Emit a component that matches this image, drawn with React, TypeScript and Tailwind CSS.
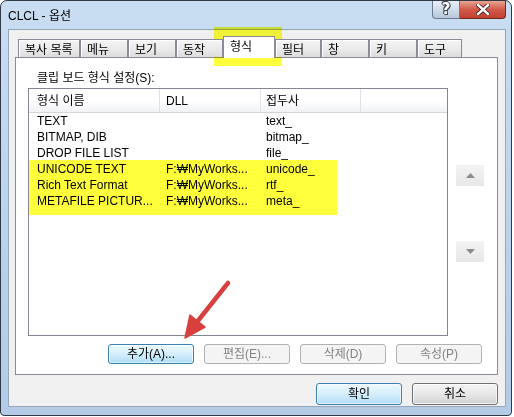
import React from "react";

const rows = [
  { name: "TEXT", dll: "", pre: "text_" },
  { name: "BITMAP, DIB", dll: "", pre: "bitmap_" },
  { name: "DROP FILE LIST", dll: "", pre: "file_" },
  { name: "UNICODE TEXT", dll: "F:₩MyWorks...", pre: "unicode_" },
  { name: "Rich Text Format", dll: "F:₩MyWorks...", pre: "rtf_" },
  { name: "METAFILE PICTUR...", dll: "F:₩MyWorks...", pre: "meta_" },
];

const tabs = [
  { label: "복사 목록", w: "w-[62px]" },
  { label: "메뉴", w: "w-[48px]" },
  { label: "보기", w: "w-[48px]" },
  { label: "동작", w: "w-[47px]" },
  { label: "형식", w: "w-[52px]", active: true },
  { label: "필터", w: "w-[46px]" },
  { label: "창", w: "w-[48px]" },
  { label: "키", w: "w-[48px]" },
  { label: "도구", w: "w-[45px]" },
];

function BlueButton({ children, className = "" }: { children: React.ReactNode; className?: string }) {
  return (
    <div
      className={`flex items-center justify-center rounded-[3px] border border-[#3c7fb1] bg-linear-to-b from-[#edf8fe] via-[#d6effc] to-[#acdcf6] shadow-[inset_0_0_0_1px_rgba(255,255,255,0.6)] ${className}`}
    >
      {children}
    </div>
  );
}

function DisabledButton({ children }: { children: React.ReactNode }) {
  return (
    <div className="flex h-[20px] w-[86px] items-center justify-center rounded-[3px] border border-[#adb2b5] bg-[#f4f4f4] text-[#838383]">
      {children}
    </div>
  );
}

export default function App() {
  return (
    <div className="relative h-[417px] w-[514px] overflow-hidden bg-white text-[12px] leading-[16px] text-black font-['Liberation_Sans','Noto_Sans_CJK_KR',sans-serif]">
      {/* window */}
      <div className="flex h-[416px] w-[512px] flex-col rounded-t-[7px] rounded-b-[4px] border border-[#2f3a46] bg-linear-to-b from-[#c9ddf2] via-[#bcd3ec] to-[#b3cbe6]">
        {/* title bar */}
        <div className="flex h-[28px] items-start">
          <div className="flex-1 pl-[7px] pt-[7px] text-[12px] leading-[16px] text-black">CLCL - 옵션</div>
          <div className="mr-[5px] flex">
            <div className="flex h-[18px] w-[28px] items-center justify-center rounded-bl-[4px] border border-t-0 border-[#6a7b90] bg-linear-to-b from-[#e9f0f7] via-[#d0dcea] to-[#b7c7da] pb-[1px] font-['DejaVu_Sans',sans-serif] text-[15px] font-bold leading-[15px] text-white [text-shadow:1px_0_0_#3a4654,-1px_0_0_#3a4654,0_1px_0_#3a4654,0_-1px_0_#3a4654,1px_1px_0_#3a4654,-1px_-1px_0_#3a4654]">
              ?
            </div>
            <div className="flex h-[18px] w-[46px] items-center justify-center rounded-br-[4px] border border-l-0 border-t-0 border-[#6e2a22] bg-linear-to-b from-[#e8a491] via-[#d0594a] to-[#c2402f]">
              <svg width="14" height="11" viewBox="0 0 14 11">
                <path d="M2 1 L12 10 M12 1 L2 10" stroke="#3b1a16" strokeWidth="4" strokeLinecap="square" />
                <path d="M2 1 L12 10 M12 1 L2 10" stroke="#ffffff" strokeWidth="2.4" strokeLinecap="square" />
              </svg>
            </div>
          </div>
        </div>

        {/* client */}
        <div className="mb-[8px] ml-[7px] mr-[5px] flex flex-1 flex-col border border-[#93a7bd] bg-[#f0f0f0]">
          {/* tabs */}
          <div className="ml-[6px] mt-[6px] flex flex-col">
            <div className="relative z-10 flex h-[21px] items-end pl-[3px]">
              {tabs.map((t) =>
                t.active ? (
                  <div
                    key={t.label}
                    className={`${t.w} -mb-px h-[22px] border border-b-0 border-[#898c95] bg-white pl-[6px] pt-[2px]`}
                  >
                    {t.label}
                  </div>
                ) : (
                  <div
                    key={t.label}
                    className={`${t.w} h-[18px] border border-b-0 border-[#898c95] bg-linear-to-b from-[#f4f4f4] via-[#ebebeb] to-[#dcdcdc] pl-[6px] pt-[2px] shadow-[inset_1px_1px_0_#ffffff]`}
                  >
                    {t.label}
                  </div>
                )
              )}
            </div>
            {/* panel */}
            <div className="flex h-[318px] w-[483px] flex-col border border-[#898c95] bg-white">
              <div className="mt-[12px] pl-[21px]">클립 보드 형식 설정(S):</div>
              <div className="mt-[2px] flex">
                {/* list view */}
                <div className="relative ml-[12px] h-[248px] w-[420px] border border-[#828790] bg-white">
                  <div className="flex h-[24px] border-b border-[#d5d5d5] bg-linear-to-b from-[#ffffff] via-[#ffffff] to-[#f1f2f4]">
                    <div className="flex w-[131px] items-center border-r border-[#e0e2e5] pl-[8px]">형식 이름</div>
                    <div className="flex w-[101px] items-center border-r border-[#e0e2e5] pl-[6px]">DLL</div>
                    <div className="flex w-[100px] items-center border-r border-[#e0e2e5] pl-[5px]">접두사</div>
                  </div>
                  <div className="flex flex-col">
                    {rows.map((r) => (
                      <div key={r.name} className="flex h-[16px] items-center whitespace-nowrap">
                        <div className="w-[131px] pl-[8px]">{r.name}</div>
                        <div className="w-[101px] pl-[6px]">{r.dll}</div>
                        <div className="w-[100px] pl-[5px]">{r.pre}</div>
                      </div>
                    ))}
                  </div>
                </div>
                {/* up/down */}
                <div className="ml-[8px] flex flex-col pt-[77px]">
                  <div className="flex h-[21px] w-[28px] items-center justify-center bg-linear-to-b from-[#f3f3f3] to-[#e8e8e8]">
                    <svg width="9" height="5" viewBox="0 0 9 5">
                      <path d="M4.5 0 L9 5 L0 5 Z" fill="#8c8c8c" />
                    </svg>
                  </div>
                  <div className="mt-[55px] flex h-[21px] w-[28px] items-center justify-center bg-linear-to-b from-[#f3f3f3] to-[#e8e8e8]">
                    <svg width="9" height="5" viewBox="0 0 9 5">
                      <path d="M0 0 L9 0 L4.5 5 Z" fill="#8c8c8c" />
                    </svg>
                  </div>
                </div>
              </div>
              {/* buttons row */}
              <div className="ml-[92px] mt-[8px] flex gap-[10px]">
                <BlueButton className="h-[20px] w-[86px]">추가(A)...</BlueButton>
                <DisabledButton>편집(E)...</DisabledButton>
                <DisabledButton>삭제(D)</DisabledButton>
                <DisabledButton>속성(P)</DisabledButton>
              </div>
            </div>
          </div>
          {/* OK / Cancel */}
          <div className="mr-[7px] mt-[8px] flex justify-end gap-[10px]">
            <BlueButton className="h-[22px] w-[86px]">확인</BlueButton>
            <div className="flex h-[22px] w-[86px] items-center justify-center rounded-[3px] border border-[#707070] bg-linear-to-b from-[#f4f4f4] via-[#e8e8e8] to-[#d2d2d2] shadow-[inset_0_0_0_1px_rgba(255,255,255,0.7)]">
              취소
            </div>
          </div>
        </div>
      </div>

      {/* annotations */}
      <div className="pointer-events-none absolute left-[214px] top-[27px] h-[39px] w-[68px] bg-[#ffff3c] mix-blend-multiply" />
      <div className="pointer-events-none absolute left-[29px] top-[160px] h-[55px] w-[308px] bg-[#ffff3c] mix-blend-multiply" />
      <svg className="pointer-events-none absolute left-0 top-0" width="514" height="417" viewBox="0 0 514 417">
        <line x1="228" y1="283" x2="197" y2="322" stroke="#d8403f" strokeWidth="4.5" strokeLinecap="round" />
        <path d="M185 338 L190 315 L205 327 Z" fill="#d8403f" stroke="#d8403f" strokeWidth="1.5" strokeLinejoin="round" />
      </svg>
    </div>
  );
}
